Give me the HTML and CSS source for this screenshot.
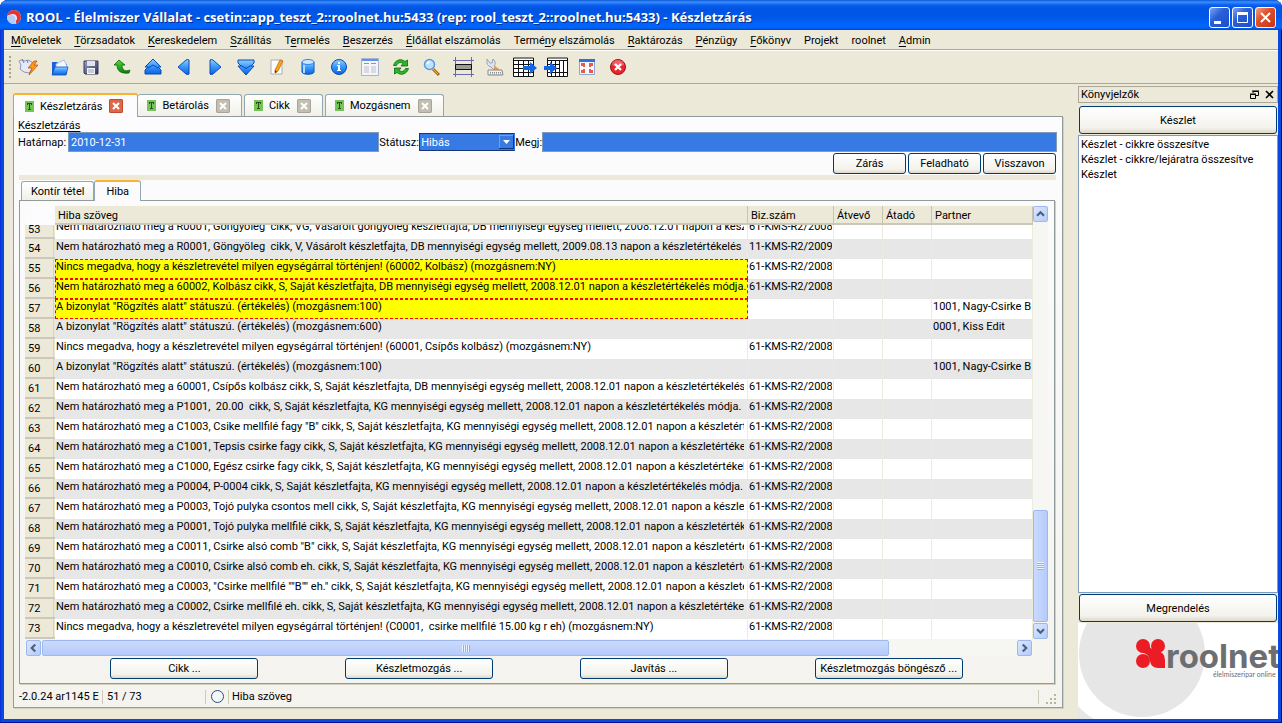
FILE: index.html
```
<!DOCTYPE html>
<html lang="hu">
<head>
<meta charset="utf-8">
<title>ROOL - Készletzárás</title>
<link rel="stylesheet" href="styles.css">
</head>
<body>
<svg class="defs" aria-hidden="true">
  <defs>
    <linearGradient id="blue" x1="0" y1="0" x2="0" y2="1"><stop offset="0" stop-color="#8fd0ff"/><stop offset=".45" stop-color="#3d9bfa"/><stop offset="1" stop-color="#0a62e0"/></linearGradient>
    <linearGradient id="green" x1="0" y1="0" x2="0" y2="1"><stop offset="0" stop-color="#4fdc3c"/><stop offset="1" stop-color="#0a7d0a"/></linearGradient>
    <linearGradient id="steel" x1="0" y1="0" x2="1" y2="1"><stop offset="0" stop-color="#9aa3c4"/><stop offset="1" stop-color="#2c3156"/></linearGradient>
    <symbol id="x" viewBox="0 0 14 14"><path d="M4 4l6 6M10 4l-6 6" stroke="#fff" stroke-width="2"/></symbol>
    <symbol id="tee" viewBox="0 0 9 11"><path fill="#74c556" d="M0 0h9v11H0z"/><path fill="#2f4d22" d="M2 2h5v2H6V3H5v5h1v1H3V8h1V3H3v1H2z"/></symbol>
    <symbol id="up" viewBox="0 0 15 15"><path d="M3.500 9.500l4-4 4 4" fill="none" stroke="#4d6185" stroke-width="2.600"/></symbol>
    <symbol id="down" viewBox="0 0 15 15"><path d="M3.500 5.500l4 4 4-4" fill="none" stroke="#4d6185" stroke-width="2.600"/></symbol>
    <symbol id="left" viewBox="0 0 15 15"><path d="M9.500 3.500l-4 4 4 4" fill="none" stroke="#4d6185" stroke-width="2.600"/></symbol>
    <symbol id="right" viewBox="0 0 15 15"><path d="M5.500 3.500l4 4-4 4" fill="none" stroke="#4d6185" stroke-width="2.600"/></symbol>
  </defs>
</svg>
<div class="window">
  <header class="titlebar">
    <svg class="app-icon" viewBox="0 0 16 16"><circle cx="8" cy="8" r="7" fill="#dbe6fb"/><path d="M1 7a7 7 0 1 1 9 7.700v-3A4 4 0 0 0 7 5C4 5 3 6 1 7z" fill="#e8322c"/><path d="M1 8c2-2 5-3 7-1s2 5 1 8C4 15.500 1 12 1 8z" fill="#b4ccf5"/></svg>
    <h1>ROOL - Élelmiszer Vállalat - csetin::app_teszt_2::roolnet.hu:5433 (rep: rool_teszt_2::roolnet.hu:5433) - Készletzárás</h1>
    <div class="controls">
      <button class="ctl" aria-label="Kis méret"><svg viewBox="0 0 19 19"><path fill="#fff" d="M4 13h7v3H4z"/></svg></button>
      <button class="ctl" aria-label="Teljes méret"><svg viewBox="0 0 19 19"><path d="M4.500 5h10v9.500h-10z" fill="none" stroke="#fff"/><path fill="#fff" d="M4 4h11v3H4z"/></svg></button>
      <button class="ctl ctl-close" aria-label="Bezárás"><svg viewBox="0 0 19 19"><path d="M5 5l9 9M14 5l-9 9" stroke="#fff" stroke-width="2"/></svg></button>
    </div>
  </header>
  <nav class="menubar">
    <button><u>M</u>űveletek</button><button><u>T</u>örzsadatok</button><button><u>K</u>ereskedelem</button><button><u>S</u>zállítás</button><button>T<u>e</u>rmelés</button><button><u>B</u>eszerzés</button><button><u>É</u>lőállat elszámolás</button><button>Termé<u>n</u>y elszámolás</button><button><u>R</u>aktározás</button><button><u>P</u>énzügy</button><button><u>F</u>őkönyv</button><button>Projekt</button><button>roolnet</button><button><u>A</u>dmin</button>
  </nav>
  <div class="toolbar">
    <span class="handle"></span>
    <button aria-label="Új"><svg viewBox="0 0 24 20"><path d="M4 3l4 1 3-1 4 2 1 6-4 5-5-1-4-3 1-4-2-4z" fill="#e6eaf7" stroke="#8d97bd"/><path d="M5 2l2 4M10 3l1 3" stroke="#6f7aa8"/><path d="M17 4l-6 7h4l-3 7 9-10h-4l3-4z" fill="#ff9a12" stroke="#c4520a" stroke-width=".8"/></svg></button>
    <button aria-label="Megnyitás"><svg viewBox="0 0 24 20"><path d="M4 5h5l2 2h8v10H4z" fill="#1c63d8"/><path d="M8 7l8-4 3 6-2 4H8z" fill="#f5f9ff" stroke="#8fb0e2" stroke-width=".8"/><path d="M7 10h13l-2 8H4z" fill="url(#blue)" stroke="#1350bd" stroke-width=".8"/></svg></button>
    <button aria-label="Mentés"><svg viewBox="0 0 24 20"><path d="M5 4h14v13H6l-1-1z" fill="url(#steel)" stroke="#34395c"/><path d="M8 4h8v5H8z" fill="#dfe3f0"/><path d="M8 11h8v6H8z" fill="#f4f5fa"/><path d="M9 13h6M9 15h6" stroke="#9aa0b8"/></svg></button>
    <button aria-label="Vissza"><svg viewBox="0 0 24 20"><path d="M9 3l-5 5h3c0 6 4 9 12 8l1-3c-5 2-8 0-8-5h3z" fill="url(#green)" stroke="#0a640a" stroke-width=".8"/></svg></button>
    <button aria-label="Első"><svg viewBox="0 0 24 20"><path d="M12 2l8 8h-3l3 3v4H4v-4l3-3H4z" fill="url(#blue)" stroke="#0b4bb8"/><path d="M7 11l5-3 5 3" fill="none" stroke="#0b4bb8"/></svg></button>
    <button aria-label="Előző"><svg viewBox="0 0 24 20"><path d="M17 3v14q-1 1-3 0L6 10l8-7q2-1 3 0z" fill="url(#blue)" stroke="#0b4bb8"/></svg></button>
    <button aria-label="Következő"><svg viewBox="0 0 24 20"><path d="M7 3v14q1 1 3 0l8-7-8-7q-2-1-3 0z" fill="url(#blue)" stroke="#0b4bb8"/></svg></button>
    <button aria-label="Utolsó"><svg viewBox="0 0 24 20"><path d="M4 3h16v3l-3 3h3l-8 9-8-9h3L4 6z" fill="url(#blue)" stroke="#0b4bb8"/><path d="M7 8.500l5 3 5-3" fill="none" stroke="#0b4bb8"/></svg></button>
    <button aria-label="Szerkesztés"><svg viewBox="0 0 24 20"><path d="M6 3h11v14H6z" fill="#fff" stroke="#a9adbd"/><path d="M15 3l3 1-5 10-3 2v-3z" fill="#f9a51c" stroke="#b86c10" stroke-width=".8"/><path d="M10 13v3l2-1z" fill="#333"/></svg></button>
    <button aria-label="Adatbázis"><svg viewBox="0 0 24 20"><path d="M6 5v10c0 3 12 3 12 0V5z" fill="url(#blue)" stroke="#0b57c8"/><ellipse cx="12" cy="5" rx="6" ry="2.500" fill="#c9e8ff" stroke="#2e86e8"/><path d="M8 8v8" stroke="#aeddff" stroke-width="2"/></svg></button>
    <button aria-label="Információ"><svg viewBox="0 0 24 20"><circle cx="12" cy="10" r="7.500" fill="url(#blue)" stroke="#0c4aa8"/><path d="M10 8h3v5h1v1h-4v-1h1V9h-1zM11 5h2v2h-2z" fill="#fff"/></svg></button>
    <button aria-label="Űrlap"><svg viewBox="0 0 24 20"><path d="M3.500 1.500h17v17h-17z" fill="#f3f5fb" stroke="#a9b4d4"/><path d="M4 2h16v2H4z" fill="#5d94ea"/><path d="M6 6.500h5M13 6.500h5" stroke="#6c9be6"/><path d="M6 9h5v7H6zM13 9h5v7h-5z" fill="#d9dbe0"/></svg></button>
    <button aria-label="Frissítés"><svg viewBox="0 0 24 20"><path d="M4.500 8.500C6 3 12 1 16 4.500L18.500 3v6H12l2-2.500C11.500 4.500 8.500 6 7.500 8.500z" fill="#2fb52a" stroke="#0a6a0a" stroke-width=".8"/><path d="M19.500 11.500C18 17 12 19 8 15.500L5.500 17v-6H12l-2 2.500c2.500 2 5.500.500 6.500-2z" fill="#2fb52a" stroke="#0a6a0a" stroke-width=".8"/></svg></button>
    <button aria-label="Keresés"><svg viewBox="0 0 24 20"><path d="M13 12l6 6" stroke="#b06a14" stroke-width="3"/><path d="M13 12l5 5" stroke="#f0b04a"/><circle cx="9.500" cy="7.500" r="5" fill="#bfe2ff" stroke="#5c9ae0" stroke-width="1.500"/><path d="M7 7q1-2 3-2" stroke="#fff" stroke-width="1.500" fill="none"/></svg></button>
    <button aria-label="Sor"><svg viewBox="0 0 24 20"><path d="M4.500 0v20M20.500 0v20M2 3.500h21M2 17.500h21" stroke="#6a68a8"/><path d="M4.500 7.500h16v5h-16z" fill="#9b9b9b" stroke="#111"/></svg></button>
    <button aria-label="Eszközök"><svg viewBox="0 0 24 20"><path d="M5 2l3 4h2l1-4q4 4 1 7l4 4-3 1-4-4Q4 9 5 2z" fill="#dfe3ee" stroke="#9aa2ba"/><path d="M13 9l5 4h-7z" fill="#f39a22"/><path d="M6 13h14l1 5H6z" fill="#f2f0ea" stroke="#8a8a92"/><path d="M8 15.500h11M8 17h11" stroke="#888" stroke-dasharray="1 1"/></svg></button>
    <button aria-label="Exportálás"><svg viewBox="0 0 24 20"><path d="M.500.500h20v19H.500z" fill="#fff"/><path d="M.500 1v18.500h20V1zM0 3.500h20M0 7.500h20M0 11.500h20M0 15.500h20M5.500 3v17M10.500 3v17M15.500 3v17" fill="none" stroke="#111"/><path d="M10 9h7V5l7 6-7 6v-4h-7z" fill="#1565e8"/></svg></button>
    <button aria-label="Importálás"><svg viewBox="0 0 24 20"><path d="M3.500.500h20v19h-20z" fill="#fff"/><path d="M3.500 1v18.500h20V1zM3 3.500h20M3 7.500h12M3 11.500h12M3 15.500h20M7.500 3v17M11.500 3v17M15.500 3v17M19.500 3v17" fill="none" stroke="#111"/><path d="M0 9h6V5l7 6-7 6v-4H0z" fill="#1565e8"/></svg></button>
    <button aria-label="Teljes képernyő"><svg viewBox="0 0 24 20"><path d="M4.500 2.500h15v15h-15z" fill="#f4f7ff" stroke="#8fa6d8"/><path d="M4 2h16v3H4z" fill="#2f6fe0"/><path d="M6 6h4v4H8V9H6zM18 6h-4v4h2V9h2zM6 16h4v-4H8v1H6zM18 16h-4v-4h2v1h2z" fill="#ea5a40"/></svg></button>
    <button aria-label="Kilépés"><svg viewBox="0 0 24 20"><circle cx="12" cy="10" r="7.500" fill="#e8242c" stroke="#a01018"/><path d="M6 8a6 5 0 0 1 12 0q-6 3-12 0z" fill="#f7868a" opacity=".6"/><path d="M9 7l6 6M15 7l-6 6" stroke="#fff" stroke-width="2.400"/></svg></button>
  </div>
  <div class="workspace">
    <main class="document">
      <div class="tabs">
        <div class="tab is-active"><svg class="tee"><use href="#tee"/></svg><button class="tab-name">Készletzárás</button><button class="close" aria-label="Bezárás"><svg><use href="#x"/></svg></button></div>
        <div class="tab"><svg class="tee"><use href="#tee"/></svg><button class="tab-name">Betárolás</button><button class="close" aria-label="Bezárás"><svg><use href="#x"/></svg></button></div>
        <div class="tab"><svg class="tee"><use href="#tee"/></svg><button class="tab-name">Cikk</button><button class="close" aria-label="Bezárás"><svg><use href="#x"/></svg></button></div>
        <div class="tab"><svg class="tee"><use href="#tee"/></svg><button class="tab-name">Mozgásnem</button><button class="close" aria-label="Bezárás"><svg><use href="#x"/></svg></button></div>
      </div>
      <section class="pane">
        <h2>Készletzárás</h2>
        <form class="fields">
          <label class="l-date" for="date">Határnap:</label><input class="f-date" id="date" type="text" value="2010-12-31">
          <label class="l-status" for="status">Státusz:</label>
          <span class="combo"><select id="status"><option>Hibás</option></select><svg viewBox="0 0 15 14"><path fill="#fff" d="M4 5h7l-3.500 4z"/></svg></span>
          <label class="l-note" for="note">Megj:</label><input class="f-note" id="note" type="text">
        </form>
        <div class="actions"><button class="btn">Zárás</button><button class="btn">Feladható</button><button class="btn">Visszavon</button></div>
        <hr>
        <div class="subtabs"><button class="subtab">Kontír tétel</button><button class="subtab is-active">Hiba</button></div>
        <section class="subpane">
          <div class="grid">
            <div class="viewport">
              <table>
                <colgroup><col class="c-num"><col class="c-text"><col class="c-doc"><col class="c-who"><col class="c-who"><col></colgroup>
                <thead><tr><td></td><th>Hiba szöveg</th><th>Biz.szám</th><th>Átvevő</th><th>Átadó</th><th>Partner</th></tr></thead>
                <tbody>
                <tr class="cut"><th><div>53</div></th><td><div>Nem határozható meg a R0001, Göngyöleg  cikk, VG, Vásárolt göngyöleg készletfajta, DB mennyiségi egység mellett, 2008.12.01 napon a készletértékelés</div></td><td><div>61-KMS-R2/2008</div></td><td></td><td></td><td></td></tr>
                <tr><th>54</th><td>Nem határozható meg a R0001, Göngyöleg  cikk, V, Vásárolt készletfajta, DB mennyiségi egység mellett, 2009.08.13 napon a készletértékelés módja.</td><td>11-KMS-R2/2009</td><td></td><td></td><td></td></tr>
                <tr><th>55</th><td class="mark">Nincs megadva, hogy a készletrevétel milyen egységárral történjen! (60002, Kolbász) (mozgásnem:NY)</td><td>61-KMS-R2/2008</td><td></td><td></td><td></td></tr>
                <tr><th>56</th><td class="mark">Nem határozható meg a 60002, Kolbász cikk, S, Saját készletfajta, DB mennyiségi egység mellett, 2008.12.01 napon a készletértékelés módja.</td><td>61-KMS-R2/2008</td><td></td><td></td><td></td></tr>
                <tr><th>57</th><td class="mark">A bizonylat "Rögzítés alatt" státuszú. (értékelés) (mozgásnem:100)</td><td></td><td></td><td></td><td>1001, Nagy-Csirke B</td></tr>
                <tr><th>58</th><td>A bizonylat "Rögzítés alatt" státuszú. (értékelés) (mozgásnem:600)</td><td></td><td></td><td></td><td>0001, Kiss Edit</td></tr>
                <tr><th>59</th><td>Nincs megadva, hogy a készletrevétel milyen egységárral történjen! (60001, Csípős kolbász) (mozgásnem:NY)</td><td>61-KMS-R2/2008</td><td></td><td></td><td></td></tr>
                <tr><th>60</th><td>A bizonylat "Rögzítés alatt" státuszú. (értékelés) (mozgásnem:100)</td><td></td><td></td><td></td><td>1001, Nagy-Csirke B</td></tr>
                <tr><th>61</th><td>Nem határozható meg a 60001, Csípős kolbász cikk, S, Saját készletfajta, DB mennyiségi egység mellett, 2008.12.01 napon a készletértékelés</td><td>61-KMS-R2/2008</td><td></td><td></td><td></td></tr>
                <tr><th>62</th><td>Nem határozható meg a P1001,  20.00  cikk, S, Saját készletfajta, KG mennyiségi egység mellett, 2008.12.01 napon a készletértékelés módja.</td><td>61-KMS-R2/2008</td><td></td><td></td><td></td></tr>
                <tr><th>63</th><td>Nem határozható meg a C1003, Csike mellfilé fagy "B" cikk, S, Saját készletfajta, KG mennyiségi egység mellett, 2008.12.01 napon a készletértékelés</td><td>61-KMS-R2/2008</td><td></td><td></td><td></td></tr>
                <tr><th>64</th><td>Nem határozható meg a C1001, Tepsis csirke fagy cikk, S, Saját készletfajta, KG mennyiségi egység mellett, 2008.12.01 napon a készletértékelés</td><td>61-KMS-R2/2008</td><td></td><td></td><td></td></tr>
                <tr><th>65</th><td>Nem határozható meg a C1000, Egész csirke fagy cikk, S, Saját készletfajta, KG mennyiségi egység mellett, 2008.12.01 napon a készletértékelés</td><td>61-KMS-R2/2008</td><td></td><td></td><td></td></tr>
                <tr><th>66</th><td>Nem határozható meg a P0004, P-0004 cikk, S, Saját készletfajta, KG mennyiségi egység mellett, 2008.12.01 napon a készletértékelés módja.</td><td>61-KMS-R2/2008</td><td></td><td></td><td></td></tr>
                <tr><th>67</th><td>Nem határozható meg a P0003, Tojó pulyka csontos mell cikk, S, Saját készletfajta, KG mennyiségi egység mellett, 2008.12.01 napon a készletértékelés</td><td>61-KMS-R2/2008</td><td></td><td></td><td></td></tr>
                <tr><th>68</th><td>Nem határozható meg a P0001, Tojó pulyka mellfilé cikk, S, Saját készletfajta, KG mennyiségi egység mellett, 2008.12.01 napon a készletértékelés</td><td>61-KMS-R2/2008</td><td></td><td></td><td></td></tr>
                <tr><th>69</th><td>Nem határozható meg a C0011, Csirke alsó comb "B" cikk, S, Saját készletfajta, KG mennyiségi egység mellett, 2008.12.01 napon a készletértékelés</td><td>61-KMS-R2/2008</td><td></td><td></td><td></td></tr>
                <tr><th>70</th><td>Nem határozható meg a C0010, Csirke alsó comb eh. cikk, S, Saját készletfajta, KG mennyiségi egység mellett, 2008.12.01 napon a készletértékelés</td><td>61-KMS-R2/2008</td><td></td><td></td><td></td></tr>
                <tr><th>71</th><td>Nem határozható meg a C0003, "Csirke mellfilé ""B"" eh." cikk, S, Saját készletfajta, KG mennyiségi egység mellett, 2008.12.01 napon a készletértékelés</td><td>61-KMS-R2/2008</td><td></td><td></td><td></td></tr>
                <tr><th>72</th><td>Nem határozható meg a C0002, Csirke mellfilé eh. cikk, S, Saját készletfajta, KG mennyiségi egység mellett, 2008.12.01 napon a készletértékelés</td><td>61-KMS-R2/2008</td><td></td><td></td><td></td></tr>
                <tr><th>73</th><td>Nincs megadva, hogy a készletrevétel milyen egységárral történjen! (C0001,  csirke mellfilé 15.00 kg r eh) (mozgásnem:NY)</td><td>61-KMS-R2/2008</td><td></td><td></td><td></td></tr>
                </tbody>
              </table>
            </div>
            <div class="vscroll">
              <button aria-label="Fel"><svg><use href="#up"/></svg></button>
              <div class="vtrack"><div class="vthumb"><i></i></div></div>
              <button aria-label="Le"><svg><use href="#down"/></svg></button>
            </div>
            <div class="hscroll">
              <button aria-label="Balra"><svg><use href="#left"/></svg></button>
              <div class="htrack"><div class="hthumb"><i></i></div></div>
              <button aria-label="Jobbra"><svg><use href="#right"/></svg></button>
            </div>
          </div>
          <div class="links">
            <button class="btn">Cikk ...</button><button class="btn">Készletmozgás ...</button><button class="btn">Javítás ...</button><button class="btn">Készletmozgás böngésző ...</button>
          </div>
        </section>
        <footer class="status">
          <span class="s-version">-2.0.24 ar1145 E</span><span class="s-count">51 / 73</span>
          <span class="s-mark"><input type="radio" aria-label="Hiba szöveg"></span><span class="s-text">Hiba szöveg</span>
          <svg class="grip" viewBox="0 0 12 12"><path fill="#b8b4a2" d="M9 1h2v2H9zM5 5h2v2H5zM9 5h2v2H9zM1 9h2v2H1zM5 9h2v2H5zM9 9h2v2H9z"/></svg>
        </footer>
      </section>
    </main>
    <aside class="dock">
      <div class="dock-title"><span>Könyvjelzők</span>
        <button aria-label="Leválasztás"><svg viewBox="0 0 9 9"><path d="M3 3V1.500h5.500v4H6M2 1h7" fill="none" stroke="#000"/><path d="M.500 4.500h5v4h-5zM0 4h6" fill="none" stroke="#000"/></svg></button>
        <button aria-label="Bezárás"><svg viewBox="0 0 9 9"><path d="M1 1l7 7M8 1L1 8" stroke="#000" stroke-width="1.600"/></svg></button>
      </div>
      <button class="btn big">Készlet</button>
      <ul><li>Készlet - cikkre összesítve</li><li>Készlet - cikkre/lejáratra összesítve</li><li>Készlet</li></ul>
      <button class="btn big">Megrendelés</button>
      <svg class="brand" viewBox="0 0 200 96" preserveAspectRatio="xMaxYMid slice">
        <path fill="#fff" d="M0 0h200v96H0z"/><circle cx="64" cy="31" r="63" fill="#e6e6e6"/><path d="M0 83q7 8 16 13H0z" fill="#e6e6e6"/>
        <g fill="#ec1c24"><circle cx="65" cy="23" r="7"/><circle cx="80" cy="23" r="7"/><circle cx="65" cy="38" r="7"/><path d="M69 18q2 9 10 10 8 1 8 9v8h-7q-7 0-8-7-1-8-10-9z"/></g>
        <text class="brand-name" x="88" y="45">roolnet</text><text class="brand-sub" x="135" y="54">élelmiszeripar online</text>
      </svg>
    </aside>
  </div>
</div>
</body>
</html>
```
FILE: styles.css
```
* { box-sizing: border-box; }
body { margin: 0; background: #fff; color: #000; font: 11px/15px Roboto, "Liberation Sans", sans-serif; }
button, input, select { font: inherit; color: inherit; margin: 0; padding: 0; border: 0; background: none; }
svg { display: block; }
.defs { position: absolute; width: 0; height: 0; }

.window { display: flex; flex-direction: column; min-height: 100vh; padding: 0 4px 4px; border-radius: 8px 8px 0 0; background: #0a49dc; box-shadow: inset 0 -1px #00138c, inset -1px 0 #00138c, inset 1px 0 #0831d9; }

.titlebar { display: flex; align-items: center; height: 30px; margin: 0 -4px; padding: 4px 6px 0; border-radius: 8px 8px 0 0; background: linear-gradient(#0a58d8 0, #3c8dfb 2px, #0a5fee 5px, #0054e3 9px, #0058ea 18px, #0066ff 25px, #0061f8 28px, #0046c8 30px); }
.app-icon { width: 16px; height: 16px; }
h1 { flex: 1; margin: 0 0 0 4px; color: #fff; font: bold 13px/20px "Open Sans", "Noto Sans", sans-serif; white-space: nowrap; text-shadow: 1px 1px #0a2a88; }
.controls { display: flex; gap: 2px; }
.ctl { width: 21px; height: 21px; border: 1px solid #fff; border-radius: 3px; background: linear-gradient(135deg, #7fa3f0, #2a5fd8 40%, #1c4ecb); }
.ctl-close { background: linear-gradient(135deg, #f0a088, #e0502c 40%, #c83410); }

.menubar { display: flex; gap: 13px; height: 20px; padding: 3px 7px 1px; border-bottom: 1px solid #aca899; background: #ece9d8; white-space: nowrap; }
.menubar u { text-underline-offset: 2px; }
.toolbar { display: flex; align-items: center; height: 34px; padding-left: 5px; border-top: 1px solid #fff; border-bottom: 1px solid #aca899; background: #ece9d8; }
.toolbar button { width: 31px; height: 20px; display: flex; justify-content: center; }
.toolbar svg { width: 24px; height: 20px; }
.handle { width: 2px; height: 22px; margin-right: 2px; background: repeating-linear-gradient(#a5a294 0 2px, transparent 2px 4px); }

.workspace { flex: 1; display: flex; gap: 15px; background: #ece9d8; }
.document { flex: 1; min-width: 0; display: flex; flex-direction: column; padding: 9px 0 11px 9px; }
.tabs { display: flex; align-items: flex-end; }
.tab { display: flex; align-items: center; height: 22px; margin-right: 2px; padding: 0 11px 0 9px; border: 1px solid #91a7b4; border-bottom: 0; border-radius: 3px 3px 0 0; background: linear-gradient(#fff, #f1f0e8); }
.tab.is-active { height: 24px; margin: 0 0 -1px; padding: 0 14px 0 11px; border-top: 2px solid #f9b233; background: #fcfcfe; position: relative; }
.tab.is-active + .tab { border-left: 0; }
.tee { width: 9px; height: 11px; }
.tab-name { margin: 0 7px 0 6px; }
.close { width: 14px; height: 14px; border-radius: 2px; background: #c2bfb2; box-shadow: inset 0 0 0 1px #a8a598; }
.close svg { width: 14px; height: 14px; }
.is-active .close { background: #e0684a; box-shadow: inset 0 0 0 1px #c04a30; }

.pane { flex: 1; display: flex; flex-direction: column; padding: 2px 5px 0 4px; border: 1px solid #919b9c; background: linear-gradient(#fcfcfe, #f4f3ee); box-shadow: 1px 1px #d3d0bf; }
h2 { margin: 0; font-size: 11px; line-height: 13px; font-weight: normal; text-decoration: underline; text-underline-offset: 2px; }
.fields { display: flex; align-items: center; }
.fields input { height: 20px; min-width: 0; padding: 0 2px; border: 1px solid #7f9db9; background: #377ae3; color: #fff; }
.l-date { flex: none; width: 50px; }
.l-status { flex: none; width: 40px; }
.l-note { flex: none; width: 27px; }
.f-date { flex: 3 1 0; }
.f-note { flex: 5 1 0; }
.combo { display: flex; align-items: center; width: 96px; height: 18px; border: 1px solid #16367c; border-right-color: #377ae3; background: #377ae3; }
.combo select { flex: 1; min-width: 0; appearance: none; padding-left: 1px; color: #fff; }
.combo svg { width: 15px; height: 14px; box-shadow: inset -1px -1px #16367c, inset 1px 1px #6ba0f2; }
.actions { display: flex; justify-content: flex-end; gap: 2px; margin: 1px 1px 0; }
.btn { height: 21px; border: 1px solid #003c74; border-radius: 3px; background: linear-gradient(#fff, #f3f2ec 80%, #dcd8cb); }
.actions .btn { width: 73px; }
hr { width: calc(100% - 2px); height: 5px; margin: 1px 1px 0; border: 0; background: #ece9d8; }

.subtabs { display: flex; align-items: flex-end; height: 21px; margin: 0 0 -1px 3px; }
.subtab { height: 19px; margin-bottom: 1px; padding: 0 9px; border: 1px solid #91a7b4; border-bottom: 0; border-radius: 3px 3px 0 0; background: linear-gradient(#fff, #f1f0e8); }
.subtab.is-active { height: 21px; margin: 0; padding: 0 11px; border-top: 2px solid #f9b233; background: #fbfbfc; position: relative; }
.subpane { flex: 1; display: flex; flex-direction: column; margin: 0 2px 0 1px; padding: 5px 6px 4px 5px; border: 1px solid #919b9c; box-shadow: 1px 1px #d3d0bf; }
.grid { flex: 1; display: grid; grid-template: 1fr 16px / minmax(0, 1fr) 15px; row-gap: 1px; }
.viewport { overflow: hidden; background: #fcfcfe; }
table { width: 100%; table-layout: fixed; border-collapse: separate; border-spacing: 0; }
.c-num { width: 30px; } .c-text { width: 693px; } .c-doc { width: 86px; } .c-who { width: 49px; }
td, th { height: 20px; padding: 0 1px 5px; overflow: clip; overflow-clip-margin: content-box; font-weight: normal; text-align: left; white-space: pre; line-height: 15px; }
thead th { height: 19px; padding: 2px 3px 0; border-bottom: 2px solid #cbc7b8; background: #ece9d8; box-shadow: inset -1px 0 #c7c5b2; }
thead td { height: 19px; padding: 0; }
tbody td { border-right: 1px solid #ececdc; background: #fff; }
tbody td:nth-child(2) { padding-right: 3px; }
tbody tr:nth-child(even) td { background: #e7e7e7; }
tbody th { padding: 1px 3px 0; border-bottom: 2px solid #cdc9ba; background: #ece9d8; box-shadow: inset -1px 0 #ece9d8, inset -2px 0 #d6d2c2; }
tbody td.mark, tbody tr:nth-child(even) td.mark { padding: 0 0 4px; border: 1px dashed #f00; background: #ff0; line-height: 14px; }
.cut td, .cut th { height: 14px; padding-top: 0; padding-bottom: 0; }
.cut div { height: 14px; display: flex; align-items: flex-end; overflow: hidden; padding-bottom: 5px; }
.cut th div { height: 12px; padding: 0; }

.vscroll, .hscroll { display: flex; background: #f6f6f2; }
.vscroll { flex-direction: column; }
.vscroll button, .hscroll button { flex: none; width: 15px; height: 16px; border: 1px solid #9db8ee; border-radius: 2px; background: linear-gradient(135deg, #dbe6fe, #b4ccfa); }
.vscroll svg, .hscroll svg { width: 13px; height: 14px; }
.vtrack { flex: 1; display: flex; flex-direction: column; justify-content: flex-end; padding-bottom: 1px; }
.vthumb { height: 28%; display: grid; place-items: center; border: 1px solid #9db8ee; border-radius: 2px; background: linear-gradient(90deg, #cbdafd, #b5cbfb); }
.vthumb i { width: 7px; height: 8px; background: repeating-linear-gradient(#eef4fe 0 1px, #8cb0f8 1px 2px); }
.hscroll { padding: 0 1px; }
.htrack { flex: 1; padding: 0 1px; }
.hthumb { width: 87%; height: 16px; display: grid; place-items: center; border: 1px solid #9db8ee; border-radius: 2px; background: linear-gradient(#cbdafd, #b5cbfb); }
.hthumb i { width: 8px; height: 7px; background: repeating-linear-gradient(90deg, #eef4fe 0 1px, #8cb0f8 1px 2px); }

.links { display: grid; grid-template-columns: repeat(4, 1fr); justify-items: center; margin-top: 2px; padding: 0 42px; }
.links .btn { width: 148px; white-space: nowrap; }

.status { display: flex; align-items: center; height: 23px; padding: 2px 0 0 1px; white-space: nowrap; }
.status span { height: 14px; line-height: 14px; border-right: 1px solid #cdcab8; }
.s-version { width: 84px; }
.s-count { width: 103px; padding-left: 4px; }
.status .s-mark { display: grid; place-items: center; width: 23px; }
.s-mark input { appearance: none; width: 13px; height: 13px; border: 1px solid #1c5180; border-radius: 50%; background: #f4f6f8; }
.s-text { flex: 1; padding-left: 3px; }
.grip { width: 12px; height: 12px; margin: 4px 0 0 6px; }

.dock { width: 200px; display: flex; flex-direction: column; padding-top: 2px; }
.dock-title { display: flex; align-items: center; gap: 6px; height: 17px; padding: 0 3px 0 2px; border: 1px solid #aca899; }
.dock-title span { flex: 1; }
.dock-title svg { width: 9px; height: 9px; }
.big { height: 28px; margin: 3px 1px 1px; }
.dock ul { flex: 1; margin: 0; padding: 1px 2px; list-style: none; border: 1px solid #7f9db9; background: #fff; }
.dock ul + .big { margin: 1px 1px 1px; }
.brand { width: 100%; height: 96px; }
.brand-name { font: bold 33px Inter, sans-serif; fill: #6d6e71; }
.brand-sub { font: 7px Lato, sans-serif; fill: #6d6e71; }
```
